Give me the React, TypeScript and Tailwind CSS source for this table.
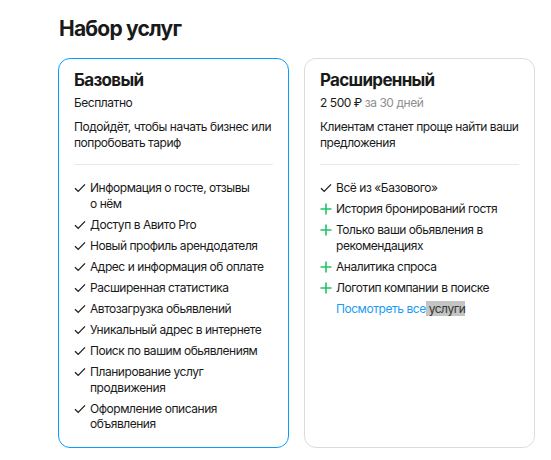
import React from "react";

const basic = [
  "Информация о госте, отзывы о\u00a0нём",
  "Доступ в Авито Pro",
  "Новый профиль арендодателя",
  "Адрес и информация об оплате",
  "Расширенная статистика",
  "Автозагрузка обьявлений",
  "Уникальный адрес в интернете",
  "Поиск по вашим обьявлениям",
  "Планирование услуг продвижения",
  "Оформление описания объявления",
];

const extended = [
  "История бронирований гостя",
  "Только ваши обьявления в рекомендациях",
  "Аналитика спроса",
  "Логотип компании в поиске",
];

function Check() {
  return (
    <svg width="12" height="10" viewBox="0 0 12 10" className="mt-[3px] shrink-0" fill="none">
      <path d="M1 5.2 L4.2 8.4 L11 1.4" stroke="#1f1f1f" strokeWidth="1.3" />
    </svg>
  );
}

function Plus() {
  return (
    <svg width="12" height="12" viewBox="0 0 12 12" className="mt-[2px] shrink-0" fill="none">
      <path d="M6 0.5 V11.5 M0.5 6 H11.5" stroke="#1fc466" strokeWidth="1.6" />
    </svg>
  );
}

export default function App() {
  return (
    <div
      className="min-h-[460px] bg-white pt-[16px] pl-[58px] text-[#1a1a1a] tracking-[-0.45px]"
      style={{ fontFamily: "Inter, 'Noto Sans', sans-serif" }}
    >
      <h1 className="mb-[16px] pl-[1px] text-[21px] font-bold leading-[26px] tracking-[-0.8px]">Набор услуг</h1>
      <div className="flex gap-[15px]">
        {/* Basic */}
        <div className="w-[231px] h-[390px] rounded-[12px] border border-[#0a9cff] px-[15px] pt-[10px]">
          <h2 className="text-[17px] font-bold leading-[22px] tracking-[-0.7px]">Базовый</h2>
          <p className="mt-[4px] text-[12px] leading-[16px]">Бесплатно</p>
          <p className="mt-[8px] text-[12px] leading-[16px]">
            Подойдёт, чтобы начать бизнес или попробовать тариф
          </p>
          <div className="mt-[13px] h-px bg-[#e8e8e8]" />
          <ul className="mt-[15px] flex flex-col gap-[5.6px]">
            {basic.map((t) => (
              <li key={t} className="flex gap-[4px] text-[12px] leading-[15.5px]">
                <Check />
                <span>{t}</span>
              </li>
            ))}
          </ul>
        </div>

        {/* Extended */}
        <div className="w-[231px] h-[390px] rounded-[12px] border border-[#dcdcdc] px-[15px] pt-[10px]">
          <h2 className="text-[17px] font-bold leading-[22px] tracking-[-0.7px]">Расширенный</h2>
          <p className="mt-[4px] text-[12px] leading-[16px]">
            2 500 ₽ <span className="text-[#8f8f8f]">за 30 дней</span>
          </p>
          <p className="mt-[8px] text-[12px] leading-[16px]">
            Клиентам станет проще найти ваши предложения
          </p>
          <div className="mt-[13px] h-px bg-[#e8e8e8]" />
          <ul className="mt-[15px] flex flex-col gap-[5.6px]">
            <li className="flex gap-[4px] text-[12px] leading-[15.5px]">
              <Check />
              <span>Всё из «Базового»</span>
            </li>
            {extended.map((t) => (
              <li key={t} className="flex gap-[4px] text-[12px] leading-[15.5px]">
                <Plus />
                <span>{t}</span>
              </li>
            ))}
          </ul>
          <p className="mt-[6px] pl-[16px] text-[12px] leading-[15.5px] text-[#1a9cf5]">
            Посмотреть все<span className="bg-[#c4c4c4] text-[#333]"> услуги</span>
          </p>
        </div>
      </div>
    </div>
  );
}
